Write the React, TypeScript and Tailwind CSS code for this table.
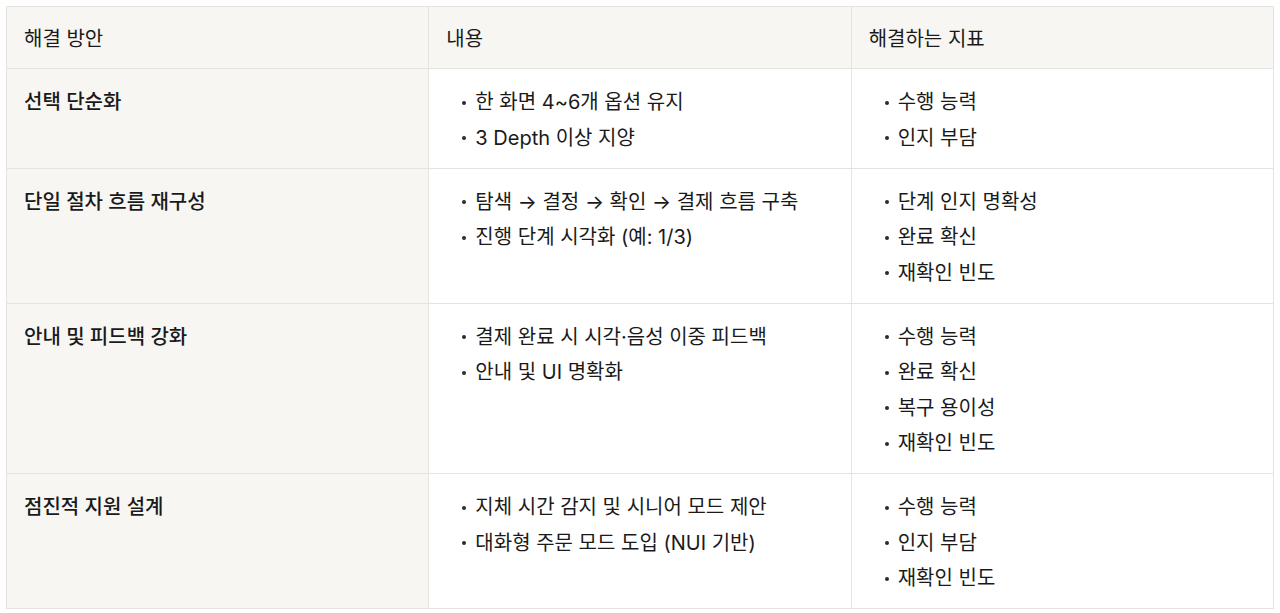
type Row = {
  title: string;
  contents: string[];
  metrics: string[];
};

const rows: Row[] = [
  {
    title: "선택 단순화",
    contents: ["한 화면 4~6개 옵션 유지", "3 Depth 이상 지양"],
    metrics: ["수행 능력", "인지 부담"],
  },
  {
    title: "단일 절차 흐름 재구성",
    contents: ["탐색 → 결정 → 확인 → 결제 흐름 구축", "진행 단계 시각화 (예: 1/3)"],
    metrics: ["단계 인지 명확성", "완료 확신", "재확인 빈도"],
  },
  {
    title: "안내 및 피드백 강화",
    contents: ["결제 완료 시 시각·음성 이중 피드백", "안내 및 UI 명확화"],
    metrics: ["수행 능력", "완료 확신", "복구 용이성", "재확인 빈도"],
  },
  {
    title: "점진적 지원 설계",
    contents: ["지체 시간 감지 및 시니어 모드 제안", "대화형 주문 모드 도입 (NUI 기반)"],
    metrics: ["수행 능력", "인지 부담", "재확인 빈도"],
  },
];

function Bullets({ items }: { items: string[] }) {
  return (
    <ul className="flex flex-col gap-[8.5px] pl-[16px]">
      {items.map((item) => (
        <li key={item} className="flex items-center">
          <span className="w-[4px] h-[4px] rounded-full bg-[#2b2b2b] mr-[9px] shrink-0" />
          <span>{item}</span>
        </li>
      ))}
    </ul>
  );
}

export default function App() {
  return (
    <div
      className="bg-white min-h-screen p-[6px] text-[20px] leading-[27px] text-[#1a1a1a]"
      style={{ fontFamily: 'Inter, "Noto Sans CJK KR", "Noto Sans", sans-serif' }}
    >
      <table className="w-full table-fixed border-collapse">
        <thead>
          <tr className="bg-[#f7f6f3]">
            <th className="border border-[#e4e3e0] px-[17px] pt-[19px] pb-[15px] text-left font-normal align-top">
              해결 방안
            </th>
            <th className="border border-[#e4e3e0] px-[17px] pt-[19px] pb-[15px] text-left font-normal align-top">
              내용
            </th>
            <th className="border border-[#e4e3e0] px-[17px] pt-[19px] pb-[15px] text-left font-normal align-top">
              해결하는 지표
            </th>
          </tr>
        </thead>
        <tbody>
          {rows.map((row) => (
            <tr key={row.title}>
              <td className="border border-[#e4e3e0] bg-[#f7f6f3] px-[17px] pt-[20px] pb-[16px] align-top font-medium">
                {row.title}
              </td>
              <td className="border border-[#e4e3e0] px-[17px] pt-[20px] pb-[16px] align-top">
                <Bullets items={row.contents} />
              </td>
              <td className="border border-[#e4e3e0] px-[17px] pt-[20px] pb-[16px] align-top">
                <Bullets items={row.metrics} />
              </td>
            </tr>
          ))}
        </tbody>
      </table>
    </div>
  );
}
